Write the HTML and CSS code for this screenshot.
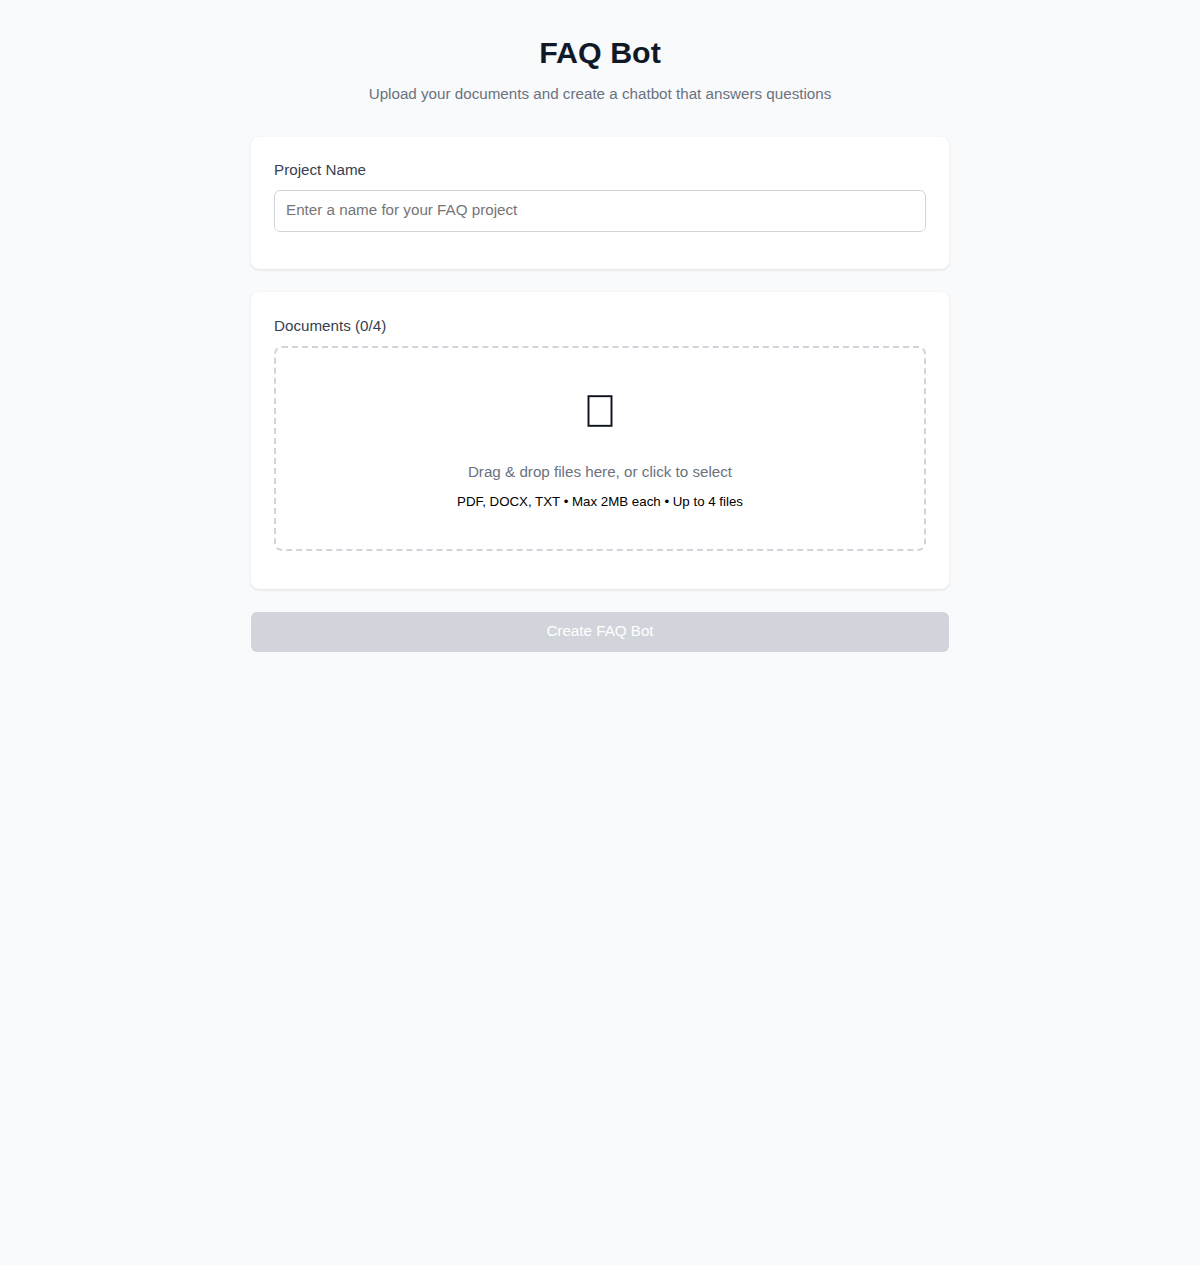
FILE: index.html
```html
<!DOCTYPE html>
<html lang="en">
<head>
  <meta charset="UTF-8">
  <title>FAQ Bot</title>
  <link rel="stylesheet" href="styles.css">
</head>
<body>
  <div class="container">
    <header class="page-header">
      <h1>FAQ Bot</h1>
      <p>Upload your documents and create a chatbot that answers questions</p>
    </header>

    <section class="card">
      <label class="field-label" for="projectName">Project Name</label>
      <input id="projectName" class="text-input" type="text" placeholder="Enter a name for your FAQ project">
    </section>

    <section class="card">
      <div class="field-label docs-label">Documents (0/4)</div>
      <div class="dropzone">
        <svg class="drop-icon" width="26" height="32" viewBox="0 0 26 32" fill="none">
          <rect x="1.5" y="1.2" width="23" height="29.6" stroke="#0b0f1a" stroke-width="1.9"/>
        </svg>
        <p class="drop-text">Drag &amp; drop files here, or click to select</p>
        <small class="drop-hint">PDF, DOCX, TXT • Max 2MB each • Up to 4 files</small>
      </div>
    </section>

    <button class="submit-btn" disabled>Create FAQ Bot</button>
  </div>
</body>
</html>
```
FILE: styles.css
```css
* {
  box-sizing: border-box;
}

body {
  margin: 0;
  min-height: 100vh;
  background: #f9fafb;
  font-family: Arial, "Liberation Sans", sans-serif;
  font-size: 15.2px;
  text-rendering: optimizeLegibility;
  color: #000;
}

.container {
  width: 698px;
  margin: 0 auto;
  padding-top: 32px;
}

.page-header {
  text-align: center;
  margin-bottom: 34px;
}

.page-header h1 {
  margin: 0 0 11px;
  font-size: 30.4px;
  line-height: 40px;
  padding-bottom: 2px;
  font-weight: 700;
  color: #111827;
}

.page-header p {
  margin: 0;
  line-height: 18px;
  color: #6b7280;
}

.card {
  background: white;
  border-radius: 8px;
  padding: 23px;
  margin-bottom: 23px;
  box-shadow: 0 1px 3px rgba(0, 0, 0, 0.1);
}

.field-label {
  display: block;
  margin-bottom: 10px;
  line-height: 20px;
  color: #374151;
}

.docs-label {
  padding-top: 1px;
}

.text-input {
  display: block;
  width: 100%;
  height: 42px;
  padding: 9px 11px 13px;
  margin-bottom: 14px;
  border: 1px solid #d1d5db;
  border-radius: 6px;
  font-family: inherit;
  font-size: 15.2px;
  text-rendering: inherit;
}

.text-input::placeholder {
  color: #757575;
}

.dropzone {
  height: 205px;
  margin-bottom: 15px;
  padding-top: 47px;
  border: 2px dashed #d1d5db;
  border-radius: 8px;
  text-align: center;
}

.drop-icon {
  display: block;
  margin: 0 auto 36px;
}

.drop-text {
  margin: 0 0 13px;
  line-height: 18px;
  color: #6b7280;
}

.drop-hint {
  display: block;
  font-size: 13.3px;
  line-height: 16px;
}

.submit-btn {
  display: block;
  width: 100%;
  height: 40px;
  padding-bottom: 4px;
  border: none;
  border-radius: 6px;
  background: #d1d5db;
  color: white;
  font-family: inherit;
  font-size: 15.2px;
  text-rendering: inherit;
}
```
